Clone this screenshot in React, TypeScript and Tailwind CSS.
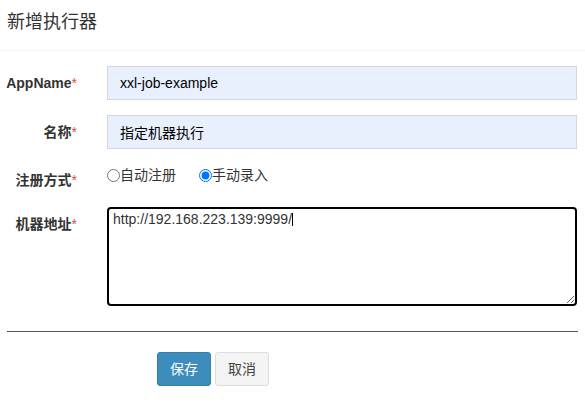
import React from "react";

const font = { fontFamily: '"Liberation Sans", "Noto Sans CJK SC", sans-serif' };

function Label({ text }: { text: string }) {
  return (
    <div className="pt-[7px] text-right text-[14px] leading-[20px] font-bold text-[#333]">
      {text}
      <span className="text-[#dd4b39] font-normal">*</span>
    </div>
  );
}

export default function App() {
  return (
    <div className="w-[585px] h-[404px] bg-white text-[#333]" style={font}>
      <div className="h-[51px] border-b border-[#f4f4f4] px-[7px] pt-[10px]">
        <h4 className="text-[18px] leading-[24px] text-[#333]">新增执行器</h4>
      </div>

      <div className="grid grid-cols-[77px_1fr] gap-x-[30px] pr-[8px] mt-[15px]">
        <Label text="AppName" />
        <input
          className="h-[34px] border border-[#d2d6de] bg-[#e8f0fe] px-[12px] text-[14px] text-black outline-none"
          defaultValue="xxl-job-example"
        />

        <div className="mt-[15px]">
          <Label text="名称" />
        </div>
        <input
          className="mt-[15px] h-[34px] border border-[#d2d6de] bg-[#e8f0fe] px-[12px] text-[14px] text-black outline-none"
          defaultValue="指定机器执行"
        />

        <div className="mt-[14px]">
          <Label text="注册方式" />
        </div>
        <div className="mt-[14px] flex items-center h-[24px] text-[14px] text-[#333]">
          <label className="flex items-center">
            <input type="radio" name="addressType" className="m-0 w-[13px] h-[13px]" />
            <span>自动注册</span>
          </label>
          <label className="flex items-center ml-[23px]">
            <input type="radio" name="addressType" defaultChecked className="m-0 w-[13px] h-[13px]" />
            <span>手动录入</span>
          </label>
        </div>

        <div className="mt-[17px]">
          <Label text="机器地址" />
        </div>
        <div className="relative mt-[17px] flex">
          <textarea
            className="w-full h-[99px] border-2 border-black rounded-[4px] px-[4px] pt-[1px] text-[14px] leading-[18px] text-[#333] outline-none resize"
            defaultValue="http://192.168.223.139:9999/"
          />
          {/* text caret */}
          <span className="absolute left-[185px] top-[6px] w-px h-[13px] bg-black" />
        </div>
      </div>

      <hr className="mx-[7px] mt-[25px] border-t border-[#555]" />

      <div className="flex gap-[4px] pl-[157px] mt-[20px]">
        <button className="w-[54px] h-[34px] rounded-[3px] border border-[#367fa9] bg-[#3c8dbc] text-white text-[14px]">
          保存
        </button>
        <button className="w-[54px] h-[34px] rounded-[3px] border border-[#ddd] bg-[#f4f4f4] text-[#444] text-[14px]">
          取消
        </button>
      </div>
    </div>
  );
}
